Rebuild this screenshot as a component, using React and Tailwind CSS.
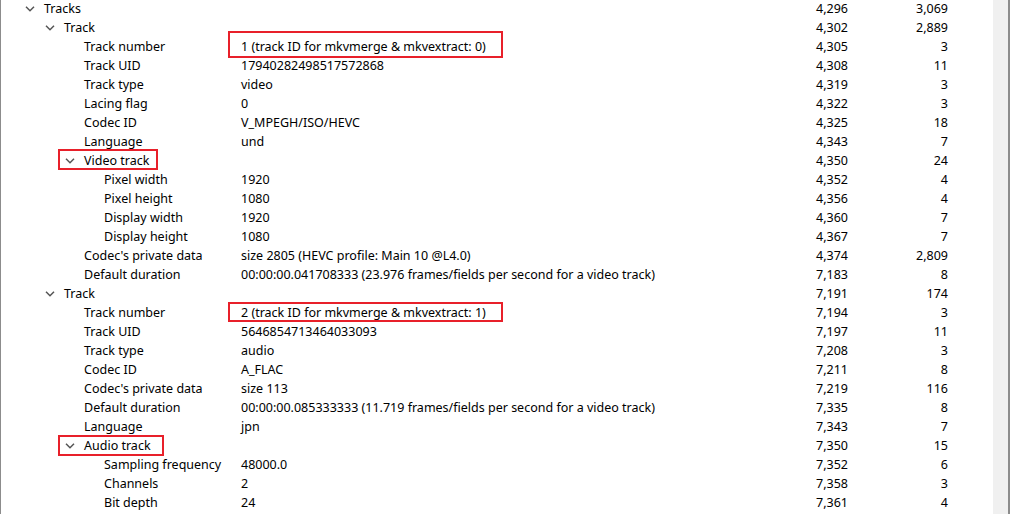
import React from "react";

const rows = [
  [0, true, "Tracks", "", "4,296", "3,069"],
  [1, true, "Track", "", "4,302", "2,889"],
  [2, false, "Track number", "1 (track ID for mkvmerge & mkvextract: 0)", "4,305", "3"],
  [2, false, "Track UID", "17940282498517572868", "4,308", "11"],
  [2, false, "Track type", "video", "4,319", "3"],
  [2, false, "Lacing flag", "0", "4,322", "3"],
  [2, false, "Codec ID", "V_MPEGH/ISO/HEVC", "4,325", "18"],
  [2, false, "Language", "und", "4,343", "7"],
  [2, true, "Video track", "", "4,350", "24"],
  [3, false, "Pixel width", "1920", "4,352", "4"],
  [3, false, "Pixel height", "1080", "4,356", "4"],
  [3, false, "Display width", "1920", "4,360", "7"],
  [3, false, "Display height", "1080", "4,367", "7"],
  [2, false, "Codec's private data", "size 2805 (HEVC profile: Main 10 @L4.0)", "4,374", "2,809"],
  [2, false, "Default duration", "00:00:00.041708333 (23.976 frames/fields per second for a video track)", "7,183", "8"],
  [1, true, "Track", "", "7,191", "174"],
  [2, false, "Track number", "2 (track ID for mkvmerge & mkvextract: 1)", "7,194", "3"],
  [2, false, "Track UID", "5646854713464033093", "7,197", "11"],
  [2, false, "Track type", "audio", "7,208", "3"],
  [2, false, "Codec ID", "A_FLAC", "7,211", "8"],
  [2, false, "Codec's private data", "size 113", "7,219", "116"],
  [2, false, "Default duration", "00:00:00.085333333 (11.719 frames/fields per second for a video track)", "7,335", "8"],
  [2, false, "Language", "jpn", "7,343", "7"],
  [2, true, "Audio track", "", "7,350", "15"],
  [3, false, "Sampling frequency", "48000.0", "7,352", "6"],
  [3, false, "Channels", "2", "7,358", "3"],
  [3, false, "Bit depth", "24", "7,361", "4"],
];

const indent = ["pl-[21px]", "pl-[41px]", "pl-[61px]", "pl-[81px]"];

function Chevron() {
  return (
    <svg width="10" height="6" viewBox="0 0 10 6" className="block">
      <polyline points="1,0.8 5,4.8 9,0.8" fill="none" stroke="#555" strokeWidth="1.5" />
    </svg>
  );
}

export default function App() {
  return (
    <div
      className="flex h-[514px] w-[1010px] overflow-hidden bg-white text-[12.5px] text-black"
      style={{ fontFamily: '"Noto Sans", "Liberation Sans", sans-serif' }}
    >
      <div className="w-px shrink-0 bg-[#8c8c8c]" />
      <div className="relative flex-1">
        <div className="-mt-px flex flex-col">
          {rows.map(([lvl, exp, name, val, pos, size], i) => (
            <div key={i} className="flex h-[19px] items-center whitespace-nowrap leading-[19px]">
              <div className={`flex w-[240px] shrink-0 items-center ${indent[lvl]}`}>
                <div className="flex w-[16px] shrink-0 items-center justify-center">
                  {exp ? <Chevron /> : null}
                </div>
                <span className="ml-[6px]">{name}</span>
              </div>
              <div className="w-[507px] shrink-0">{val}</div>
              <div className="w-[100px] shrink-0 text-right">{pos}</div>
              <div className="w-[100px] shrink-0 text-right">{size}</div>
            </div>
          ))}
        </div>
        <div className="pointer-events-none absolute left-[227px] top-[31px] h-[27px] w-[275px] border-2 border-[#e8202a]" />
        <div className="pointer-events-none absolute left-[57px] top-[149px] h-[21px] w-[100px] border-2 border-[#e8202a]" />
        <div className="pointer-events-none absolute left-[227px] top-[302px] h-[20px] w-[275px] border-2 border-[#e8202a]" />
        <div className="pointer-events-none absolute left-[57px] top-[435px] h-[21px] w-[106px] border-2 border-[#e8202a]" />
      </div>
      <div className="w-[15px] shrink-0 bg-[#f0f0f0]" />
      <div className="w-[2px] shrink-0 bg-[#8c8c8c]" />
    </div>
  );
}
